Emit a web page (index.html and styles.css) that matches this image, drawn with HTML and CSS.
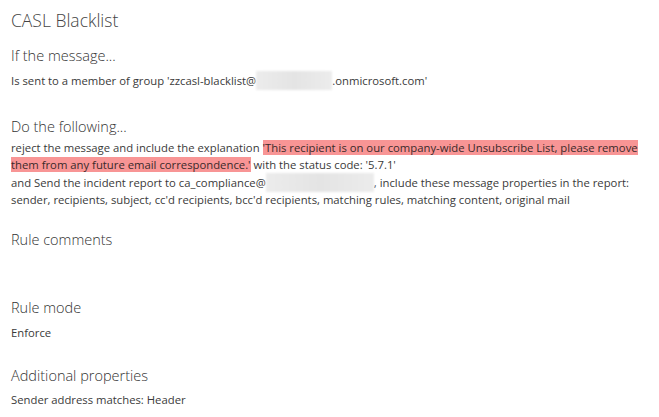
FILE: index.html
```html
<!DOCTYPE html>
<html>
<head>
<meta charset="utf-8">
<link rel="stylesheet" href="styles.css">
</head>
<body>
<div class="page">
  <h1 class="title">CASL Blacklist</h1>
  <section class="sec sec-if">
    <h2 class="head">If the message...</h2>
    <p class="txt">Is sent to a member of group 'zzcasl-blacklist@<span class="blur b1"></span>.onmicrosoft.com'</p>
  </section>
  <section class="sec sec-do">
    <h2 class="head">Do the following...</h2>
    <p class="txt">reject the message and include the explanation <mark class="hl">'This recipient is on our company-wide Unsubscribe List, please remove them from any future email correspondence.'</mark> with the status code: '5.7.1'<br>and Send the incident report to ca_compliance@<span class="blur b2"></span>, include these message properties in the report: sender, recipients, subject, cc'd recipients, bcc'd recipients, matching rules, matching content, original mail</p>
  </section>
  <section class="sec sec-comments">
    <h2 class="head">Rule comments</h2>
  </section>
  <section class="sec sec-mode">
    <h2 class="head">Rule mode</h2>
    <p class="txt">Enforce</p>
  </section>
  <section class="sec sec-add">
    <h2 class="head">Additional properties</h2>
    <p class="txt">Sender address matches: Header</p>
  </section>
</div>
</body>
</html>
```

FILE: styles.css
```css
html, body {
  margin: 0;
  padding: 0;
  background: #ffffff;
}
body {
  font-family: "Open Sans", "Noto Sans", sans-serif;
  color: #333333;
}
.page {
  padding: 7px 0 0 11px;
  width: 659px;
  box-sizing: border-box;
}
.title {
  margin: 0;
  font-size: 17.5px;
  font-weight: 300;
  line-height: 26px;
  color: #444444;
}
.sec {
  margin: 0;
}
.head {
  margin: 0;
  font-size: 14.5px;
  font-weight: 300;
  line-height: 20px;
  color: #333333;
}
.txt {
  margin: 0;
  font-size: 11.3px;
  line-height: 16.7px;
  color: #3a3a3a;
}
.sec-if { margin-top: 13px; }
.sec-if .txt { margin-top: 5px; }
.sec-do { margin-top: 27px; }
.sec-do .txt { margin-top: 3px; }
.sec-comments { margin-top: 21px; height: 56px; }
.sec-mode { margin-top: 12px; }
.sec-mode .txt { margin-top: 7px; }
.sec-add { margin-top: 24px; }
.sec-add .txt { margin-top: 6px; }
.hl {
  background: #f89595;
  color: #3a2a2a;
  padding: 0;
}
.blur {
  display: inline-block;
  vertical-align: -5px;
  height: 19px;
  background: linear-gradient(90deg, #ececec, #e4e4e4 50%, #ececec);
  filter: blur(1px);
}
.b1 { width: 76px; }
.b2 { width: 108px; }
```
